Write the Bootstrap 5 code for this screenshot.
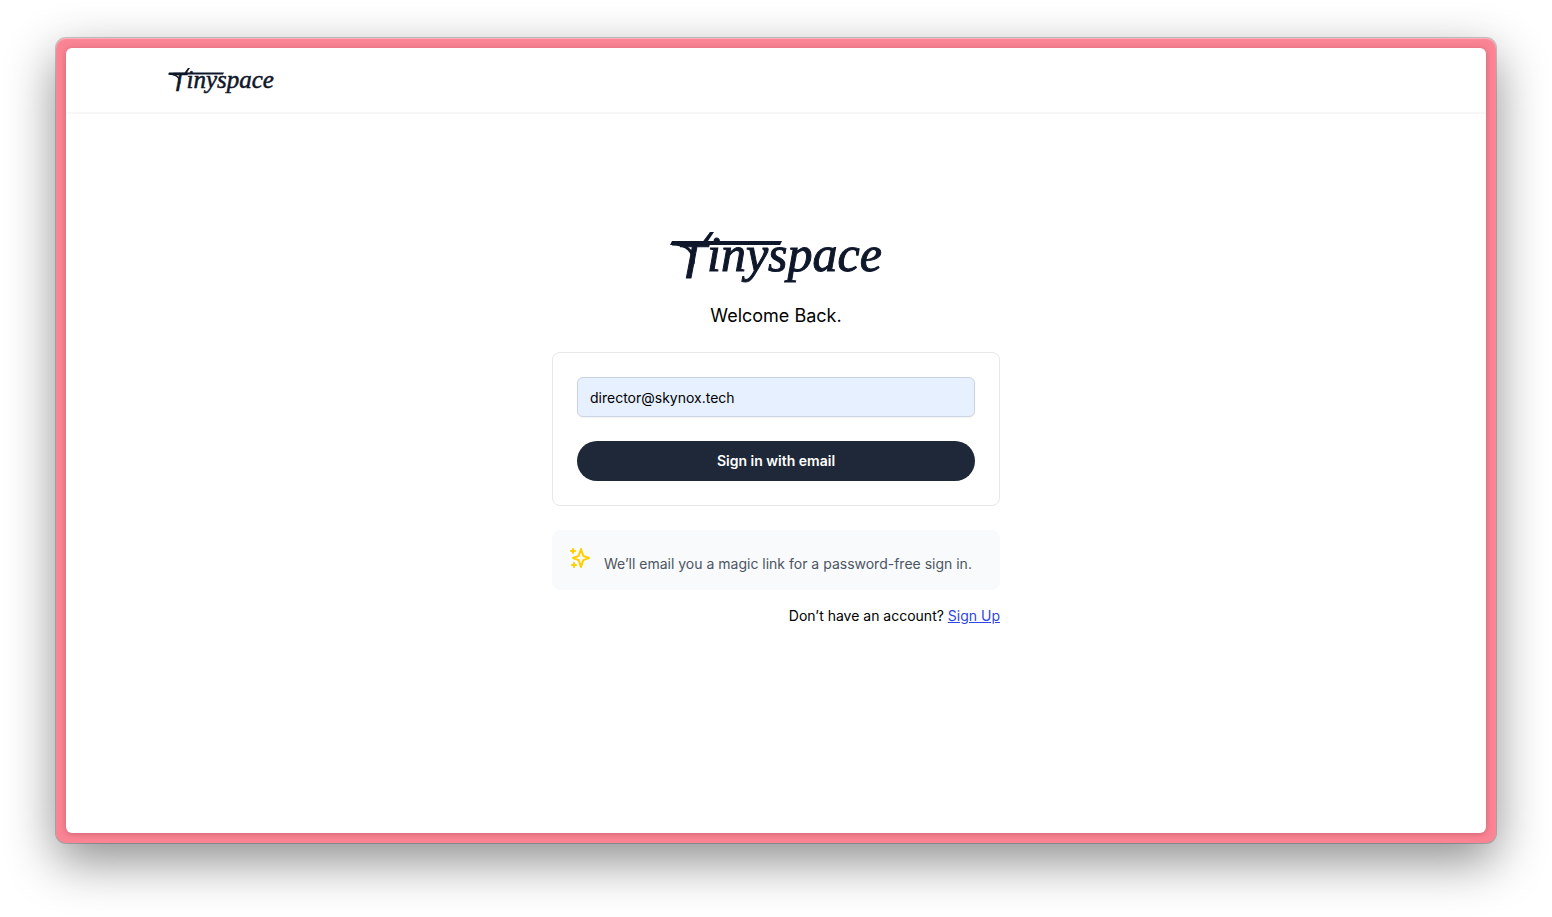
<!DOCTYPE html>
<html lang="en">
<head>
<meta charset="utf-8">
<meta name="viewport" content="width=device-width, initial-scale=1">
<title>Tinyspace – Sign in</title>
<link href="https://cdn.jsdelivr.net/npm/bootstrap@5.3.0/dist/css/bootstrap.min.css" rel="stylesheet">
<style>
  body { font-family: Inter, "Liberation Sans", sans-serif; font-size: 14px; line-height: 20px; color: #000; background: #fff; padding: 38px 56px 74px; }
  .frame { background: #fa8494; padding: 10px; border-radius: 10px; box-shadow: 0 0 0 1px rgba(0,0,0,.2), 0 18px 50px rgba(0,0,0,.45), inset 0 1px 1px rgba(255,255,255,.4); }
  .page { background: #fff; border-radius: 6px; box-shadow: 0 1px 6px rgba(80,0,20,.25); }
  .topbar { border-bottom: 2px solid #f7f7f8; padding: 20px 0; }
  .topbar-inner { width: 100%; max-width: 1216px; margin: 0 auto; }
  .wordmark { display: block; fill: #0f172a; stroke: #0f172a; stroke-width: 1px; overflow: visible; }
  .wordmark text { font: italic 50px "Liberation Serif", serif; }
  .wordmark .initial { font-family: "Liberation Sans", sans-serif; }
  .wordmark .bar { stroke: none; }
  .wordmark .swash { fill: none; stroke-width: 3px; }
  .signin { width: 100%; max-width: 448px; margin: 0 auto; padding-top: 118px; }
  .welcome { font-size: 18px; line-height: 28px; font-weight: 400; margin: 22px 0; }
  .panel { border: 1px solid #e5e7eb; border-radius: 8px; padding: 24px; }
  .email-field { height: 40px; font-size: 14px; padding: 8px 12px; border-color: #cbd5e1; border-radius: 6px; color: #000; background: #e7f0ff; box-shadow: 0 1px 2px rgba(0,0,0,.06); }
  .email-field:focus { background: #e7f0ff; }
  .btn-signin { height: 40px; font-size: 14px; line-height: 20px; font-weight: 600; color: #fff; background: #1f2838; }
  .btn-signin:hover { color: #fff; background: #334155; }
  .notice { background: #f9fafb; border-radius: 8px; padding: 16px; color: #4b5563; }
  .notice p { padding-top: 8px; }
  .signup-link { color: #2f45e6; }
</style>
</head>
<body class="min-vh-100 d-flex flex-column">
<div class="frame flex-grow-1 d-flex">
  <div class="page flex-grow-1 d-flex flex-column">
    <header class="topbar">
      <div class="topbar-inner d-flex">
        <a href="#" aria-label="Tinyspace">
          <svg class="wordmark" width="106" height="24" viewBox="0 0 212 48">
            <text x="6" y="46"><tspan class="initial">T</tspan><tspan x="37" y="39">inyspace</tspan></text>
            <path class="bar" d="M2 9H112L110 13H0ZM40 0H44L36 12H31Z"/>
            <path class="swash" d="M2 12C17 12 25 20 23 32"/>
          </svg>
        </a>
      </div>
    </header>
    <main class="signin">
      <svg class="wordmark mx-auto" width="212" height="48" viewBox="0 0 212 48" role="img" aria-label="Tinyspace">
        <text x="6" y="46"><tspan class="initial">T</tspan><tspan x="37" y="39">inyspace</tspan></text>
        <path class="bar" d="M2 9H112L110 13H0ZM40 0H44L36 12H31Z"/>
        <path class="swash" d="M2 12C17 12 25 20 23 32"/>
      </svg>
      <h1 class="welcome text-center">Welcome Back.</h1>
      <form class="panel d-grid gap-4">
        <input type="email" class="form-control email-field" aria-label="Email address" value="director@skynox.tech">
        <button type="submit" class="btn btn-signin rounded-pill">Sign in with email</button>
      </form>
      <div class="notice d-flex mt-4">
        <svg width="24" height="24" viewBox="0 0 24 24" fill="none" stroke="#ffcf00" stroke-width="2" stroke-linecap="round" stroke-linejoin="round" class="flex-shrink-0" aria-hidden="true">
          <path d="M5 3v4M3 5h4M6 17v4m-2-2h4m5-16l2.286 6.857L21 12l-5.714 2.143L13 21l-2.286-6.857L5 12l5.714-2.143L13 3z"/>
        </svg>
        <p class="mb-0 ms-2 ps-1">We’ll email you a magic link for a password-free sign in.</p>
      </div>
      <p class="text-end mt-3 mb-0">Don’t have an account? <a href="#" class="signup-link">Sign Up</a></p>
    </main>
  </div>
</div>
<script src="https://cdn.jsdelivr.net/npm/bootstrap@5.3.0/dist/js/bootstrap.bundle.min.js"></script>
</body>
</html>
